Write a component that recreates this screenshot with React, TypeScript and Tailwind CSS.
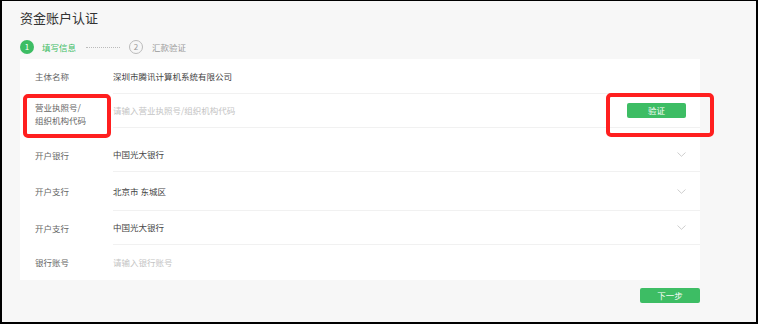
import React from 'react';

const FONT = { fontFamily: '"Noto Sans CJK SC", "Noto Sans", sans-serif' };

function Chevron() {
  return (
    <svg width="9" height="5" viewBox="0 0 9 5" className="block">
      <polyline points="0.5,0.5 4.5,4.3 8.5,0.5" fill="none" stroke="#c8c8c8" strokeWidth="0.9" />
    </svg>
  );
}

type Row = {
  label: React.ReactNode;
  value: string;
  placeholder?: boolean;
  extra?: 'chevron' | 'button';
  rowClass: string;
  labelClass?: string;
  last?: boolean;
};

const ROWS: Row[] = [
  { label: '主体名称', value: '深圳市腾讯计算机系统有限公司', rowClass: 'h-[35px] items-center' },
  {
    label: (
      <>
        营业执照号/
        <br />
        组织机构代码
      </>
    ),
    value: '请输入营业执照号/组织机构代码',
    placeholder: true,
    extra: 'button',
    rowClass: 'h-[34px] items-center',
    labelClass: 'self-start pt-[7px] leading-[13px]',
  },
  { label: '开户银行', value: '中国光大银行', extra: 'chevron', rowClass: 'h-[44px] items-center pt-[10px]' },
  { label: '开户支行', value: '北京市 东城区', extra: 'chevron', rowClass: 'h-[39px] items-center' },
  { label: '开户支行', value: '中国光大银行', extra: 'chevron', rowClass: 'h-[34px] items-center' },
  { label: '银行账号', value: '请输入银行账号', placeholder: true, rowClass: 'h-[35px] items-center', last: true },
];

export default function App() {
  return (
    <div
      className="relative w-[758px] h-[324px] bg-[#f7f7f7] border-t border-l-2 border-r-2 border-b-2 border-black pl-[18px] pt-[7px]"
      style={FONT}
    >
      {/* Title */}
      <h1 className="h-[20px] leading-[20px] text-[13px] text-[#333]">资金账户认证</h1>

      {/* Steps */}
      <div className="mt-[12px] h-[14px] flex items-center text-[8.5px]">
        <span className="w-[14px] h-[14px] rounded-full bg-[#3dbd64] text-white flex items-center justify-center text-[8px] leading-none">
          1
        </span>
        <span className="ml-[8px] text-[#3dbd64]">填写信息</span>
        <span className="ml-[10px] w-[34px] border-t border-dotted border-[#bbb]" />
        <span className="ml-[9px] w-[14px] h-[14px] rounded-full border border-[#bbb] text-[#999] flex items-center justify-center text-[8px] leading-none">
          2
        </span>
        <span className="ml-[9px] text-[#999]">汇款验证</span>
      </div>

      {/* Form card */}
      <div className="mt-[5px] w-[680px] bg-white text-[8.5px]">
        {ROWS.map((r, i) => (
          <div key={i} className={`flex ${r.rowClass}`}>
            <div className={`w-[93px] shrink-0 pl-[15px] text-[#666] ${r.labelClass || ''}`}>{r.label}</div>
            <div
              className={`flex-1 self-stretch flex items-center justify-between pr-[14px] ${
                r.last ? '' : 'border-b border-[#f1f1f1]'
              }`}
            >
              <span className={r.placeholder ? 'text-[#c4c4c4]' : 'text-[#444]'}>{r.value}</span>
              {r.extra === 'chevron' && <Chevron />}
              {r.extra === 'button' && (
                <button className="w-[59px] h-[15px] rounded-[2px] bg-[#3dbd64] text-white text-[8.5px] leading-none">
                  验证
                </button>
              )}
            </div>
          </div>
        ))}
      </div>

      {/* Next */}
      <div className="w-[680px] mt-[8px] flex justify-end">
        <button className="w-[60px] h-[15px] rounded-[2px] bg-[#3dbd64] text-white text-[8.5px] leading-none">
          下一步
        </button>
      </div>

      {/* Annotation boxes */}
      <div className="absolute left-[21px] top-[93px] w-[88px] h-[44px] border-[4px] border-[#ff1f1f] rounded-[5px]" />
      <div className="absolute left-[604px] top-[92px] w-[108px] h-[44px] border-[4px] border-[#ff1f1f] rounded-[5px]" />
    </div>
  );
}
